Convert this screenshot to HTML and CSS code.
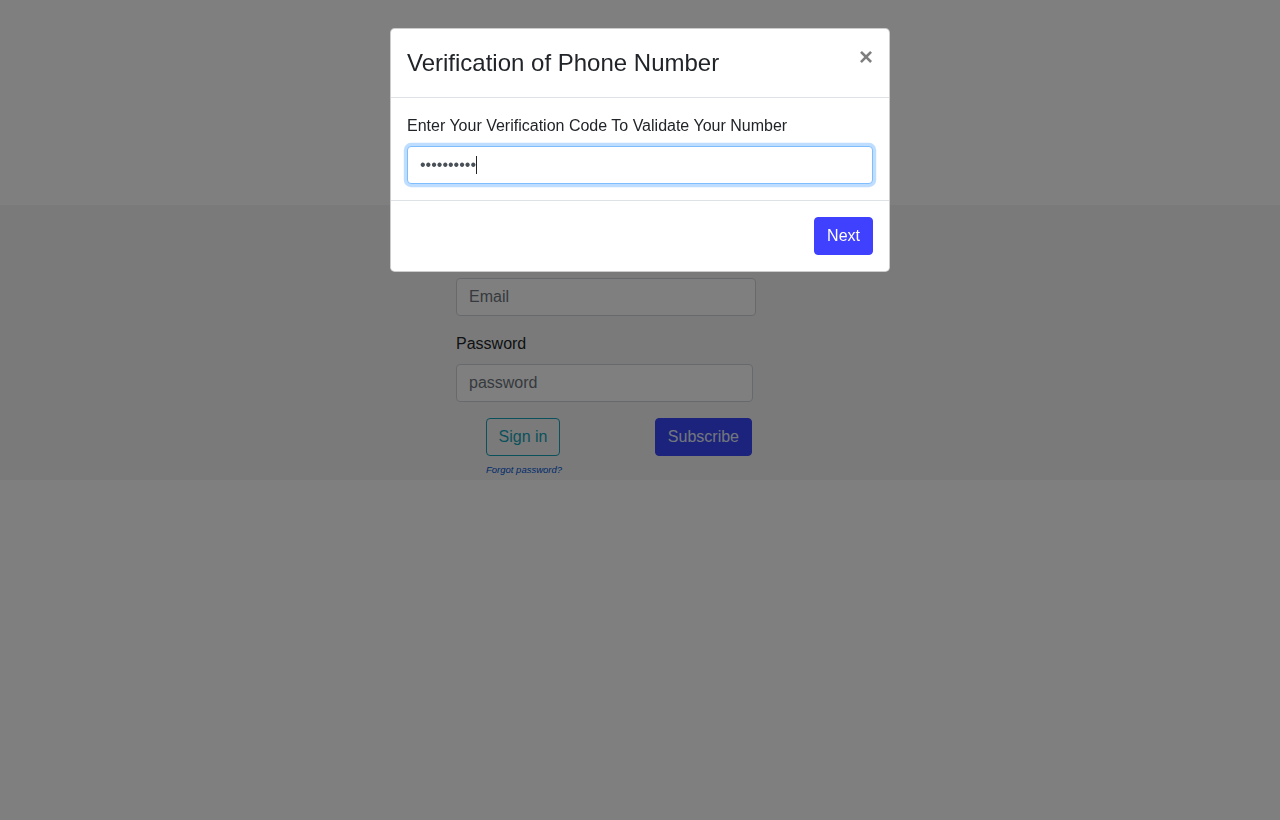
FILE: index.html
```html
<!DOCTYPE html>
<html lang="en">
<head>
<meta charset="utf-8">
<title>Verification</title>
<link rel="stylesheet" href="styles.css">
</head>
<body>
<div class="page">
  <div class="top-space"></div>
  <section class="signin">
    <form class="form">
      <div class="group">
        <label class="label">Email</label>
        <div class="input input-email"><span class="ph">Email</span></div>
      </div>
      <div class="group">
        <label class="label">Password</label>
        <div class="input input-pass"><span class="ph">password</span></div>
      </div>
      <div class="actions">
        <div class="signin-col">
          <button type="button" class="btn btn-outline">Sign in</button>
          <a class="forgot" href="#">Forgot password?</a>
        </div>
        <button type="button" class="btn btn-subscribe">Subscribe</button>
      </div>
    </form>
  </section>
</div>

<div class="backdrop"></div>

<div class="modal">
  <div class="modal-content">
    <div class="modal-header">
      <h4 class="modal-title">Verification of Phone Number</h4>
      <button type="button" class="close">&times;</button>
    </div>
    <div class="modal-body">
      <label class="label">Enter Your Verification Code To Validate Your Number</label>
      <div class="input focused"><span class="dots">••••••••••</span><span class="caret"></span></div>
    </div>
    <div class="modal-footer">
      <button type="button" class="btn btn-blue">Next</button>
    </div>
  </div>
</div>
</body>
</html>
```

FILE: styles.css
```css
* { box-sizing: border-box; }

html, body {
  margin: 0;
  padding: 0;
  height: 100%;
}

body {
  background: #ffffff;
  font-family: "Liberation Sans", Arial, sans-serif;
  font-size: 16px;
  line-height: 1.5;
  color: #212529;
}

.top-space { height: 205px; }

.signin {
  background: #f5f5f5;
  height: 275px;
  padding-top: 41px;
}

.form {
  width: 300px;
  margin-left: 456px;
}

.group { margin-bottom: 16px; }

.label {
  display: block;
  margin-bottom: 8px;
  font-size: 16px;
  line-height: 24px;
  color: #212529;
}

.input {
  display: flex;
  align-items: center;
  height: 38px;
  padding: 0 12px;
  background: #fff;
  border: 1px solid #ced4da;
  border-radius: 4px;
  font-size: 16px;
  color: #495057;
}

.input-email { width: 300px; }
.input-pass { width: 297px; }

.ph { color: #6c757d; }

.actions {
  display: flex;
  justify-content: space-between;
  align-items: flex-start;
  width: 296px;
}

.signin-col {
  display: flex;
  flex-direction: column;
  align-items: flex-start;
  margin-left: 30px;
}

.btn {
  font-family: "Liberation Sans", Arial, sans-serif;
  font-size: 16px;
  line-height: 24px;
  padding: 6px 12px;
  border-radius: 4px;
  border: 1px solid transparent;
  cursor: pointer;
}

.btn-outline {
  background: transparent;
  color: #17a2b8;
  border-color: #17a2b8;
  padding: 6px 11.5px;
}

.btn-blue {
  background: #4040ff;
  color: #fff;
  border-color: #4040ff;
}

.btn-subscribe {
  background: #3846f8;
  color: #e4ecfa;
  border-color: #3846f8;
}

.forgot {
  margin-top: 7px;
  font-size: 9.5px;
  line-height: 14px;
  font-style: italic;
  color: #0056d6;
  text-decoration: none;
}

.backdrop {
  position: fixed;
  inset: 0;
  background: rgba(0, 0, 0, 0.5);
}

.modal {
  position: fixed;
  inset: 0;
}

.modal-content {
  width: 500px;
  margin: 28px auto 0;
  background: #fff;
  border: 1px solid rgba(0, 0, 0, 0.2);
  border-radius: 4.8px;
}

.modal-header {
  display: flex;
  align-items: flex-start;
  padding: 16px;
  border-bottom: 1px solid #dee2e6;
}

.modal-title {
  margin: 0;
  font-size: 24px;
  font-weight: 400;
  line-height: 36px;
  color: #212529;
}

.close {
  margin: -16px -16px -16px auto;
  padding: 16px;
  background: transparent;
  border: 0;
  font-family: "Liberation Sans", Arial, sans-serif;
  font-size: 24px;
  font-weight: 700;
  line-height: 1;
  color: #000;
  opacity: 0.5;
  cursor: pointer;
}

.modal-body { padding: 16px; }

.input.focused {
  border-color: #80bdff;
  box-shadow: 0 0 0 3.2px rgba(0, 123, 255, 0.25);
}

.dots {
  color: #495057;
  font-size: 16px;
}

.caret {
  display: inline-block;
  width: 1px;
  height: 18px;
  background: #212529;
}

.modal-footer {
  display: flex;
  justify-content: flex-end;
  padding: 12px;
  border-top: 1px solid #dee2e6;
}

.modal-footer .btn { margin: 4px; }
```
